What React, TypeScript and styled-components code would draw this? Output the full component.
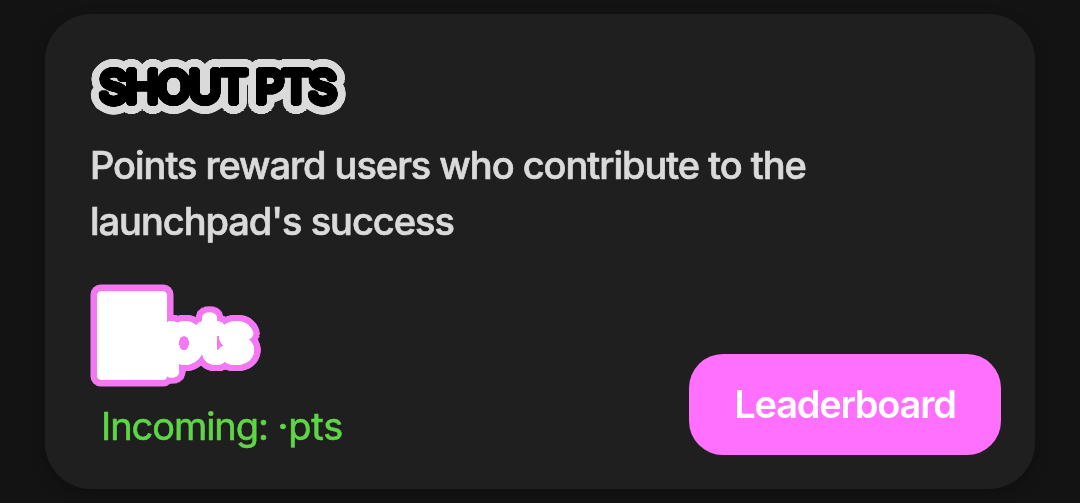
import React from "react";
import styled, {createGlobalStyle} from "styled-components";

const GlobalStyle = createGlobalStyle`
  body {
    margin: 0;
    background: #131313;
    font-family: Inter, 'Liberation Sans', sans-serif;
  }
`

// Stacks copies of the text on a circle, which gives a round outline
const ring = (radius: number, color: string) => {
  const steps = 48
  return Array.from({length: steps}, (_, i) => {
    const angle = (i / steps) * Math.PI * 2
    return `${(Math.cos(angle) * radius).toFixed(2)}px ${(Math.sin(angle) * radius).toFixed(2)}px 0 ${color}`
  }).join(', ')
}

const Page = styled.main`
  box-sizing: border-box;
  height: 503px;
  padding: 14px 45px;
  overflow: hidden;
`

const Card = styled.section`
  box-sizing: border-box;
  height: 475px;
  padding: 46px 34px 34px 45px;
  border-radius: 46px;
  background: #1f1f1f;
  box-shadow: 0 4px 14px rgba(0, 0, 0, 0.25);
  display: flex;
  flex-direction: column;
  will-change: transform;
`

const Title = styled.h1`
  margin: 0;
  padding-left: 9px;
  height: 54px;
  line-height: 54px;
  font-size: 45px;
  font-weight: 500;
  letter-spacing: -2.6px;
  white-space: nowrap;
  color: #000;
  text-shadow: ${ring(1.2, '#000')}, ${ring(2.6, '#000')}, ${ring(10.6, '#dadada')};
`

const Description = styled.p`
  margin: 23px 0 0;
  width: 760px;
  line-height: 56px;
  font-size: 38px;
  font-weight: 500;
  letter-spacing: -1.03px;
  color: #dadada;
  -webkit-text-stroke: 0.7px #dadada;
`

const Footer = styled.div`
  flex: 1;
  display: flex;
  justify-content: space-between;
  align-items: flex-end;
`

const Points = styled.div`
  height: 170px;
`

const Balance = styled.div`
  display: flex;
  height: 102px;
  padding: 6px 6px 6px 7px;
  box-sizing: border-box;
`

const Amount = styled.span`
  position: relative;
  width: 70px;
  height: 89px;
  border-radius: 4px;
  box-shadow: 0 0 0 6.5px #f478f4;

  /* sits above the outline of the unit beside it */
  &::after {
    content: '';
    position: absolute;
    inset: 0;
    z-index: 1;
    border-radius: 4px;
    background: #fff;
  }
`

const Unit = styled.span`
  position: relative;
  margin-left: -3px;
  line-height: 92px;
  font-size: 63px;
  font-weight: 400;
  letter-spacing: -1.6px;
  color: #fff;
  text-shadow: ${ring(2, '#fff')}, ${ring(4.6, '#fff')}, ${ring(11.2, '#f478f4')};
`

const Incoming = styled.div`
  padding: 11px 0 0 11px;
  line-height: 56px;
  font-size: 38px;
  letter-spacing: -1.05px;
  color: #5fd646;
  -webkit-text-stroke: 0.6px #5fd646;
`

const IncomingAmount = styled.span`
  letter-spacing: -0.2px;
`

const LeaderboardButton = styled.button`
  width: 312px;
  height: 101px;
  padding: 0 0 2px;
  border: 0;
  border-radius: 34px;
  background: #ff70ff;
  color: #fff;
  font-family: inherit;
  font-size: 38px;
  font-weight: 600;
  letter-spacing: -1.25px;
`

const App = () => {
  return (
    <>
      <GlobalStyle/>
      <Page>
        <Card>
          <Title>SHOUT PTS</Title>
          <Description>Points reward users who contribute to the launchpad's success</Description>
          <Footer>
            <Points>
              <Balance>
                <Amount/>
                <Unit>pts</Unit>
              </Balance>
              <Incoming>Incoming: <IncomingAmount>·pts</IncomingAmount></Incoming>
            </Points>
            <LeaderboardButton>Leaderboard</LeaderboardButton>
          </Footer>
        </Card>
      </Page>
    </>
  )
}

export default App
